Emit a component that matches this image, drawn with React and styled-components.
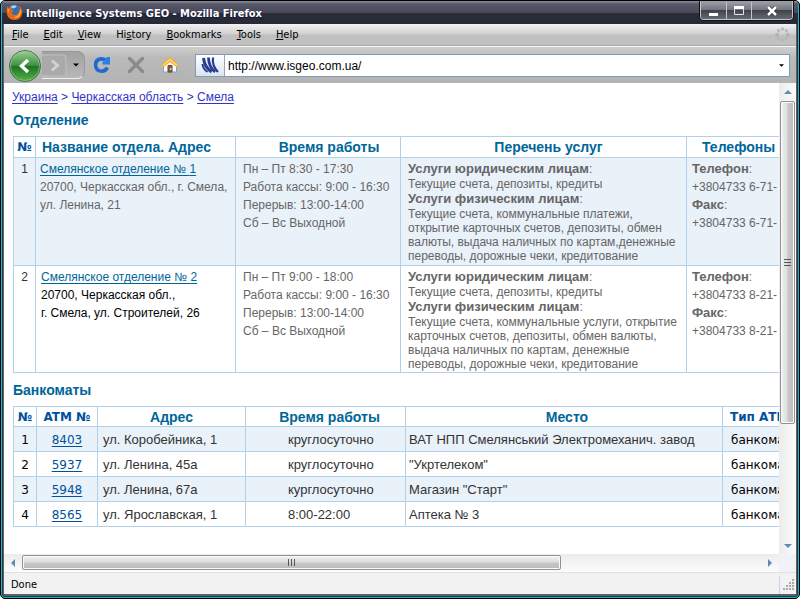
import React from "react";
import styled, { createGlobalStyle, css } from "styled-components";

const sans = '"Liberation Sans", Arial, sans-serif';
const ui = '"DejaVu Sans Condensed", "DejaVu Sans", Tahoma, sans-serif';
const wide = '"DejaVu Sans", Verdana, sans-serif';
const line = "#b3d0eb";
const tint = "#e9f1f9";

const Global = createGlobalStyle`
  * { box-sizing: border-box; }
  html, body, #root { height: 100%; }
  body { margin: 0; background: #fff; font-family: ${sans}; }
  button { border: 0; padding: 0; background: none; color: inherit; font: inherit; }
`;

const Frame = styled.div`
  min-height: 100vh;
  display: flex;
  background: #fff;
`;

const Window = styled.div`
  flex: 1;
  min-width: 0;
  display: flex;
  flex-direction: column;
  overflow: hidden;
  background: #5d5f66;
  border: 1px solid #000;
  border-radius: 5px;
  box-shadow: inset 0 0 0 1px #17b6cf, inset 0 0 0 2px #2c3a44;
  padding: 0 3px 4px;
`;

const TitleBar = styled.header`
  height: 23px;
  flex: none;
  margin: 0 -2px;
  padding-left: 4px;
  padding-right: 5px;
  display: flex;
  align-items: center;
  gap: 3px;
  background: linear-gradient(#8c8d9e 0, #56586a 3px, #484a5c 50%, #2c2d3a 52%, #282936 100%);
`;

const Title = styled.h1`
  flex: 1;
  margin: 0;
  padding-top: 3px;
  color: #fff;
  font: bold 11px/14px ${ui};
  white-space: nowrap;
  text-shadow: 0 1px 2px #10123a;
`;

const Controls = styled.div`
  align-self: flex-start;
  display: flex;
  border: 1px solid #c3c5cb;
  border-top-color: #9a9ca6;
  border-radius: 0 0 4px 4px;
  box-shadow: 0 0 0 1px #111218;
  overflow: hidden;
`;

const ControlButton = styled.button`
  width: ${(p) => (p.$wide ? 41 : 25)}px;
  height: 17px;
  display: grid;
  place-items: center;
  background: linear-gradient(#9b9da6, #74767f 45%, #41444b 50%, #656a70);
  & + & { border-left: 1px solid #c3c5cb; }
`;

const MenuBar = styled.nav`
  height: 22px;
  flex: none;
  display: flex;
  align-items: center;
  gap: 15px;
  padding: 0 6px 0 8px;
  background: linear-gradient(#f2f2f2, #d2d2d2 45%, #bfbfbf 55%, #c1c1c1);
  border-bottom: 1px solid #aaa;
  font: 11px/14px ${ui};
`;

const MenuItem = styled.button`
  color: #000;
`;

const Spring = styled.span`
  flex: 1;
`;

const Toolbar = styled.div`
  height: 37px;
  flex: none;
  display: flex;
  align-items: center;
  padding: 0 6px 0 4px;
  background: linear-gradient(#cfcfcf, #bababa 30%, #b3b3b3);
  border-top: 1px solid #f8f8f8;
`;

const HistoryPod = styled.div`
  display: flex;
  align-items: center;
  height: 32px;
`;

const PodTail = styled.div`
  height: 28px;
  width: 43px;
  display: flex;
  align-items: center;
  justify-content: space-between;
  padding-right: 5px;
  background: linear-gradient(#a2a2a2, #b8b8b8);
  border: 1px solid #999;
  border-bottom-color: #eee;
  border-left: 0;
  border-radius: 0 8px 8px 0;
`;

const IconButton = styled.button`
  display: grid;
  place-items: center;
  width: 34px;
  height: 32px;
`;

const SmallButton = styled.button`
  display: grid;
  place-items: center;
  height: 25px;
`;

const AddressBar = styled.label`
  flex: 1;
  min-width: 0;
  height: 23px;
  margin-left: 8px;
  display: flex;
  align-items: center;
  background: #fff;
  border: 1px solid #7f9db9;
  padding-right: 5px;
`;

const SiteIcon = styled.span`
  width: 29px;
  height: 21px;
  display: grid;
  place-items: center;
  background: linear-gradient(#fff, #d9e4f4);
  border-right: 1px solid #9aa4b4;
`;

const AddressInput = styled.input`
  flex: 1;
  min-width: 0;
  border: 0;
  outline: 0;
  padding: 1px 3px 0;
  background: transparent;
  color: #000;
  font: 12px/18px ${sans};
`;

const Viewport = styled.div`
  flex: 1;
  min-height: 0;
  display: grid;
  grid-template-columns: minmax(0, 1fr) 17px;
  grid-template-rows: 1fr 18px;
  background: #fff;
`;

const Page = styled.main`
  min-width: 0;
  overflow: hidden;
  padding: 7px 0 0 9px;
  color: #666;
`;

const Crumbs = styled.nav`
  margin-left: -1px;
  color: #3333aa;
  font: 12px/14px ${sans};
`;

const CrumbLink = styled.a`
  color: #3333cc;
  text-underline-offset: 2px;
`;

const Heading = styled.h2`
  margin: ${(p) => p.$top}px 0 0;
  padding: 0 0 ${(p) => p.$bottom}px;
  color: #006699;
  font: bold 14px/16px ${sans};
`;

const Grid = styled.table`
  width: ${(p) => p.$width}px;
  table-layout: fixed;
  border-collapse: collapse;
`;

const Col = styled.col`
  width: ${(p) => p.$w}px;
`;

const HeadCell = styled.th`
  height: ${(p) => p.$h}px;
  padding: 0 0 0 ${(p) => p.$pad || 0}px;
  border: 1px solid ${line};
  color: ${(p) => (p.$deep ? "#0050a0" : "#006699")};
  font: bold ${(p) => (p.$deep ? 12 : 14)}px/16px ${(p) => (p.$deep ? wide : sans)};
  text-align: ${(p) => p.$align || "center"};
  white-space: nowrap;
`;

const Row = styled.tr`
  background: ${(p) => (p.$tinted ? tint : "#fff")};
`;

const cell = css`
  border: 1px solid ${line};
  vertical-align: top;
  white-space: nowrap;
`;

const BranchCell = styled.td`
  ${cell}
  height: ${(p) => p.$h}px;
  padding: 2px 0 0 ${(p) => p.$pad || 4}px;
  color: ${(p) => (p.$dark ? "#000" : "#666")};
  font: 12px/18px ${sans};
`;

const NumberCell = styled(BranchCell)`
  padding-left: 0;
  color: #333;
  text-align: center;
`;

const ServiceCell = styled(BranchCell)`
  padding: 3px 0 0 7px;
  font: 12px/14px ${sans};
`;

const ServiceTitle = styled.div`
  line-height: 15px;
`;

const Strong = styled.b`
  font-size: 13px;
`;

const CellLink = styled.a`
  color: #006699;
  text-underline-offset: 2px;
`;

const AtmCell = styled.td`
  ${cell}
  height: 25px;
  padding: 1px 0 0 ${(p) => p.$pad || 0}px;
  vertical-align: middle;
  text-align: ${(p) => p.$align || "left"};
  color: ${(p) => (p.$dark ? "#000" : "#333")};
  font: ${(p) => (p.$dark ? 12 : 13)}px/16px ${(p) => (p.$dark ? wide : sans)};
  a { color: #0050a0; text-underline-offset: 2px; }
`;

const track = css`
  display: flex;
  align-items: center;
  justify-content: space-between;
`;

const VerticalBar = styled.div`
  ${track}
  flex-direction: column;
  background: linear-gradient(90deg, #ececec, #fbfbfb);
`;

const HorizontalBar = styled.div`
  ${track}
  background: linear-gradient(#ececec, #fcfcfc);
`;

const ArrowButton = styled.button`
  display: grid;
  place-items: center;
  width: 18px;
  height: 17px;
`;

const VerticalTrack = styled.div`
  flex: 1;
  width: 100%;
`;

const HorizontalTrack = styled.div`
  flex: 1;
  height: 100%;
  padding: 1px 0;
`;

const thumb = css`
  display: grid;
  place-items: center;
  border: 1px solid #929292;
  border-radius: 2px;
  box-shadow: inset 0 0 0 1px #fafafa;
`;

const VerticalThumb = styled.div`
  ${thumb}
  height: 74%;
  width: 15px;
  margin: 1px;
  background: linear-gradient(90deg, #f2f2f2, #dcdcdc 48%, #c8c8c8 52%, #bcbcbc);
`;

const HorizontalThumb = styled.div`
  ${thumb}
  width: 73%;
  height: 15px;
  background: linear-gradient(#f2f2f2, #dcdcdc 48%, #c8c8c8 52%, #b9b9b9);
`;

const Corner = styled.div`
  background: #f0f2f8;
`;

const StatusBar = styled.footer`
  height: 22px;
  flex: none;
  display: flex;
  align-items: center;
  justify-content: space-between;
  padding: 4px 1px 0 7px;
  background: linear-gradient(#cfcfcf 0, #f2f2f2 1px);
  color: #000;
  font: 11px/14px ${ui};
`;

const GripBox = styled.span`
  width: 16px;
  height: 18px;
  border-left: 1px solid #c4d4ec;
  display: flex;
  align-items: center;
  justify-content: flex-end;
`;

const Foxy = () => (
  <svg width="17" height="17" viewBox="0 0 17 17" aria-hidden="true">
    <circle cx="8" cy="7.5" r="6.4" fill="#2e6fb5" />
    <path d="M4 3Q7 0 11 2Q10 4 7 4.500Z" fill="#9fd3f0" />
    <path d="M1.300 2.200L3 4.100Q4.200 3.300 5.600 3.700L5.400 5.500L8 6.900L5.600 8.200Q6 11 9.300 11Q13.600 10.300 12.500 5.800L14 7Q14 3.500 12 1.600Q16.600 4 16.200 9Q15.600 15.800 8.600 16Q1.300 15.800 .7 8.800Q.4 5 1.300 2.200Z" fill="#e66a16" />
    <path d="M13.900 4.800Q16 9 13 12.200Q10 14.900 5.500 12.600Q9.300 14.200 12.100 11.500Q14.600 9 13.900 4.800Z" fill="#ffd34a" />
    <path d="M1.600 4.700L3.100 5.500L2.600 9Q1.600 7 1.600 4.700Z" fill="#ffae39" />
  </svg>
);

const Back = () => (
  <svg width="34" height="34" viewBox="0 0 34 34" aria-hidden="true">
    <defs>
      <linearGradient id="green" x2="0" y2="1">
        <stop offset="0" stopColor="#9bcf96" />
        <stop offset=".48" stopColor="#3f9141" />
        <stop offset=".52" stopColor="#1f7424" />
        <stop offset="1" stopColor="#55b447" />
      </linearGradient>
    </defs>
    <circle cx="17" cy="17" r="15.500" fill="url(#green)" stroke="#437449" />
    <circle cx="17" cy="17" r="14.500" fill="none" stroke="#a9d4a3" strokeOpacity=".55" />
    <path d="M20 11L13.500 17L20 23" fill="none" stroke="#fff" strokeWidth="3.400" />
  </svg>
);

const Forward = () => (
  <svg width="25" height="23" viewBox="0 0 25 23" aria-hidden="true">
    <path d="M0 1H21Q24 1 24 4V19Q24 22 21 22H0" fill="#aaa" stroke="#c0c0c0" />
    <path d="M10 6.500L15.500 11.500L10 16.500" fill="none" stroke="#d2d2d2" strokeWidth="3" />
  </svg>
);

const Caret = ({ size = 6, color = "#000", turn = 0 }) => (
  <svg width={size} height={size} viewBox="0 0 8 8" aria-hidden="true">
    <path d="M0 2H8L4 6Z" fill={color} transform={`rotate(${turn} 4 4)`} />
  </svg>
);

const Reload = () => (
  <svg width="18" height="18" viewBox="0 0 18 18" aria-hidden="true">
    <path d="M12.500 4.200Q10.800 2.800 8 2.900Q2.600 3.500 2.600 9Q2.800 15 8.500 15.200Q13 15 14.300 11.500" fill="none" stroke="#1e6ad2" strokeWidth="3.600" />
    <path d="M13.500 1H17V8.500H9.500V5.500H12Z" fill="#2a7fe2" />
  </svg>
);

const Stop = () => (
  <svg width="18" height="18" viewBox="0 0 18 18" aria-hidden="true">
    <path d="M2.500 2.500L15.500 15.500M15.500 2.500L2.500 15.500" stroke="#8b8b8b" strokeWidth="3.400" strokeLinecap="round" />
  </svg>
);

const Home = () => (
  <svg width="20" height="18" viewBox="0 0 20 18" aria-hidden="true">
    <path d="M3.500 8L10 3L16.500 8V16H3.500Z" fill="#f8fbff" stroke="#7fa3cf" />
    <path d="M10 1.500L18.500 9L16.500 10.500L10 5.500L3.500 10.500L1.500 9Z" fill="#ffd25a" stroke="#eda52f" />
    <path d="M8 9.500H12V16H8Z" fill="#98602c" stroke="#6f4420" />
    <path d="M10 12H11.500V14H10Z" fill="#a9d5f5" />
  </svg>
);

const Waves = () => (
  <svg width="18" height="18" viewBox="0 0 18 18" aria-hidden="true">
    <g fill="none" stroke="#283d8f">
      <path d="M1.500 8Q2 13 6.500 16" strokeWidth="2" />
      <path d="M2.500 2Q3.500 11 10.500 16" strokeWidth="3" />
      <path d="M7.500 1.500Q7.500 10.500 14 16" strokeWidth="2.800" />
      <path d="M12 1.500Q11 10.500 17 16" strokeWidth="2.200" />
    </g>
  </svg>
);

const Throbber = () => (
  <svg width="15" height="15" viewBox="0 0 15 15" aria-hidden="true">
    {[0, 45, 90, 135, 180, 225, 270, 315].map((a) => (
      <circle key={a} cx="7.500" cy="2" r="1.700" fill="#888" opacity={a > 90 && a < 270 ? 0.15 : 0.4} transform={`rotate(${a} 7.500 7.500)`} />
    ))}
  </svg>
);

const Ridge = ({ turn = 0 }) => (
  <svg width="9" height="9" viewBox="0 0 9 9" aria-hidden="true">
    <path d="M1.500 1V8M4.500 1V8M7.500 1V8" stroke="#555" transform={`rotate(${turn} 4.500 4.500)`} />
  </svg>
);

const Grip = () => (
  <svg width="12" height="12" viewBox="0 0 12 12" aria-hidden="true">
    <path d="M9 0h2v2h-2zM6 3h2v2h-2zM9 3h2v2h-2zM3 6h2v2h-2zM6 6h2v2h-2zM9 6h2v2h-2zM0 9h2v2h-2zM3 9h2v2h-2zM6 9h2v2h-2zM9 9h2v2h-2z" fill="#aaa" />
  </svg>
);

const branches = [
  {
    n: 1,
    h: 108,
    address: ["20700, Черкасская обл., г. Смела,", "ул. Ленина, 21"],
    hours: ["Пн – Пт 8:30 - 17:30", "Работа кассы: 9:00 - 16:30", "Перерыв: 13:00-14:00", "Сб – Вс Выходной"],
    personal: [
      "Текущие счета, коммунальные платежи,",
      "открытие карточных счетов, депозиты, обмен",
      "валюты, выдача наличных по картам,денежные",
      "переводы, дорожные чеки, кредитование",
    ],
    phone: "+3804733 6-71-",
  },
  {
    n: 2,
    h: 107,
    address: ["20700, Черкасская обл.,", "г. Смела, ул. Строителей, 26"],
    hours: ["Пн – Пт 9:00 - 18:00", "Работа кассы: 9:00 - 16:30", "Перерыв: 13:00-14:00", "Сб – Вс Выходной"],
    personal: [
      "Текущие счета, коммунальные услуги, открытие",
      "карточных счетов, депозиты, обмен валюты,",
      "выдача наличных по картам, денежные",
      "переводы, дорожные чеки, кредитование",
    ],
    phone: "+3804733 8-21-",
  },
];

const atms = [
  ["8403", "ул. Коробейника, 1", "круглосуточно", "ВАТ НПП Смелянський Электромеханич. завод"],
  ["5937", "ул. Ленина, 45а", "круглосуточно", "\"Укртелеком\""],
  ["5948", "ул. Ленина, 67а", "курглосуточно", "Магазин \"Старт\""],
  ["8565", "ул. Ярославская, 1", "8:00-22:00", "Аптека № 3"],
];

const Lines = ({ items }) => items.map((t) => <div key={t}>{t}</div>);

function BranchTable() {
  return (
    <Grid $width={870}>
      <colgroup>
        {[22, 200, 165, 286, 197].map((w, i) => <Col key={i} $w={w} />)}
      </colgroup>
      <thead>
        <tr>
          <HeadCell $h={21} $deep>№</HeadCell>
          <HeadCell $h={21} $pad={6} $align="left">Название отдела. Адрес</HeadCell>
          <HeadCell $h={21} $pad={22}>Время работы</HeadCell>
          <HeadCell $h={21} $pad={10}>Перечень услуг</HeadCell>
          <HeadCell $h={21} $pad={15} $align="left">Телефоны</HeadCell>
        </tr>
      </thead>
      <tbody>
        {branches.map((b) => (
          <Row key={b.n} $tinted={b.n === 1}>
            <NumberCell $h={b.h}>{b.n}</NumberCell>
            <BranchCell $dark={b.n === 2} $pad={b.n === 2 ? 5 : 4}>
              <CellLink href="#">Смелянское отделение № {b.n}</CellLink>
              <Lines items={b.address} />
            </BranchCell>
            <BranchCell $pad={7}><Lines items={b.hours} /></BranchCell>
            <ServiceCell>
              <ServiceTitle><Strong>Услуги юридическим лицам</Strong>:</ServiceTitle>
              <div>Текущие счета, депозиты, кредиты</div>
              <ServiceTitle><Strong>Услуги физическим лицам</Strong>:</ServiceTitle>
              <Lines items={b.personal} />
            </ServiceCell>
            <BranchCell $pad={5}>
              <div><Strong>Телефон</Strong>:</div>
              <div>{b.phone}</div>
              <div><Strong>Факс</Strong>:</div>
              <div>{b.phone}</div>
            </BranchCell>
          </Row>
        ))}
      </tbody>
    </Grid>
  );
}

function AtmTable() {
  return (
    <Grid $width={870}>
      <colgroup>
        {[23, 61, 148, 160, 317, 161].map((w, i) => <Col key={i} $w={w} />)}
      </colgroup>
      <thead>
        <tr>
          <HeadCell $h={20} $deep>№</HeadCell>
          <HeadCell $h={20} $deep>ATM №</HeadCell>
          <HeadCell $h={20}>Адрес</HeadCell>
          <HeadCell $h={20} $pad={8}>Время работы</HeadCell>
          <HeadCell $h={20} $pad={6}>Место</HeadCell>
          <HeadCell $h={20} $deep $pad={7} $align="left">Тип АТМ</HeadCell>
        </tr>
      </thead>
      <tbody>
        {atms.map(([id, address, hours, place], i) => (
          <Row key={id} $tinted={i % 2 === 0}>
            <AtmCell $dark $align="center">{i + 1}</AtmCell>
            <AtmCell $dark $align="center"><a href="#">{id}</a></AtmCell>
            <AtmCell $pad={5}>{address}</AtmCell>
            <AtmCell $pad={42}>{hours}</AtmCell>
            <AtmCell $pad={3}>{place}</AtmCell>
            <AtmCell $dark $pad={8}>банкомат</AtmCell>
          </Row>
        ))}
      </tbody>
    </Grid>
  );
}

export default function App() {
  return (
    <Frame>
      <Global />
      <Window>
        <TitleBar>
          <Foxy />
          <Title>Intelligence Systems GEO - Mozilla Firefox</Title>
          <Controls>
            <ControlButton aria-label="Minimize">
              <svg width="10" height="10"><path d="M0 7H9V10H0Z" fill="#fff" /></svg>
            </ControlButton>
            <ControlButton aria-label="Maximize">
              <svg width="12" height="10"><path d="M1.500 1V8.500H10.500V1Z" fill="none" stroke="#e4e4ec" /><path d="M1 0H11V3H1Z" fill="#fff" /></svg>
            </ControlButton>
            <ControlButton $wide aria-label="Close">
              <svg width="12" height="10"><path d="M2 1L10 9M10 1L2 9" stroke="#34363f" strokeWidth="4" /><path d="M2 1L10 9M10 1L2 9" stroke="#fff" strokeWidth="2.500" /></svg>
            </ControlButton>
          </Controls>
        </TitleBar>
        <MenuBar>
          <MenuItem><u>F</u>ile</MenuItem>
          <MenuItem><u>E</u>dit</MenuItem>
          <MenuItem><u>V</u>iew</MenuItem>
          <MenuItem>Hi<u>s</u>tory</MenuItem>
          <MenuItem><u>B</u>ookmarks</MenuItem>
          <MenuItem><u>T</u>ools</MenuItem>
          <MenuItem><u>H</u>elp</MenuItem>
          <Spring />
          <Throbber />
        </MenuBar>
        <Toolbar>
          <HistoryPod>
            <IconButton aria-label="Back"><Back /></IconButton>
            <PodTail>
              <SmallButton aria-label="Forward"><Forward /></SmallButton>
              <SmallButton aria-label="History"><Caret /></SmallButton>
            </PodTail>
          </HistoryPod>
          <IconButton aria-label="Reload"><Reload /></IconButton>
          <IconButton aria-label="Stop"><Stop /></IconButton>
          <IconButton aria-label="Home"><Home /></IconButton>
          <AddressBar>
            <SiteIcon><Waves /></SiteIcon>
            <AddressInput aria-label="Address" defaultValue="http://www.isgeo.com.ua/" />
            <Caret size={5} />
          </AddressBar>
        </Toolbar>
        <Viewport>
          <Page>
            <Crumbs>
              <CrumbLink href="#">Украина</CrumbLink> &gt; <CrumbLink href="#">Черкасская область</CrumbLink> &gt; <CrumbLink href="#">Смела</CrumbLink>
            </Crumbs>
            <Heading $top={8} $bottom={8}>Отделение</Heading>
            <BranchTable />
            <Heading $top={9} $bottom={8}>Банкоматы</Heading>
            <AtmTable />
          </Page>
          <VerticalBar>
            <ArrowButton aria-label="Scroll up"><Caret size={8} color="#5c8bb5" turn={180} /></ArrowButton>
            <VerticalTrack><VerticalThumb><Ridge turn={90} /></VerticalThumb></VerticalTrack>
            <ArrowButton aria-label="Scroll down"><Caret size={8} color="#5c8bb5" /></ArrowButton>
          </VerticalBar>
          <HorizontalBar>
            <ArrowButton aria-label="Scroll left"><Caret size={8} color="#5c8bb5" turn={90} /></ArrowButton>
            <HorizontalTrack><HorizontalThumb><Ridge /></HorizontalThumb></HorizontalTrack>
            <ArrowButton aria-label="Scroll right"><Caret size={8} color="#5c8bb5" turn={-90} /></ArrowButton>
          </HorizontalBar>
          <Corner />
        </Viewport>
        <StatusBar>
          Done
          <GripBox><Grip /></GripBox>
        </StatusBar>
      </Window>
    </Frame>
  );
}
